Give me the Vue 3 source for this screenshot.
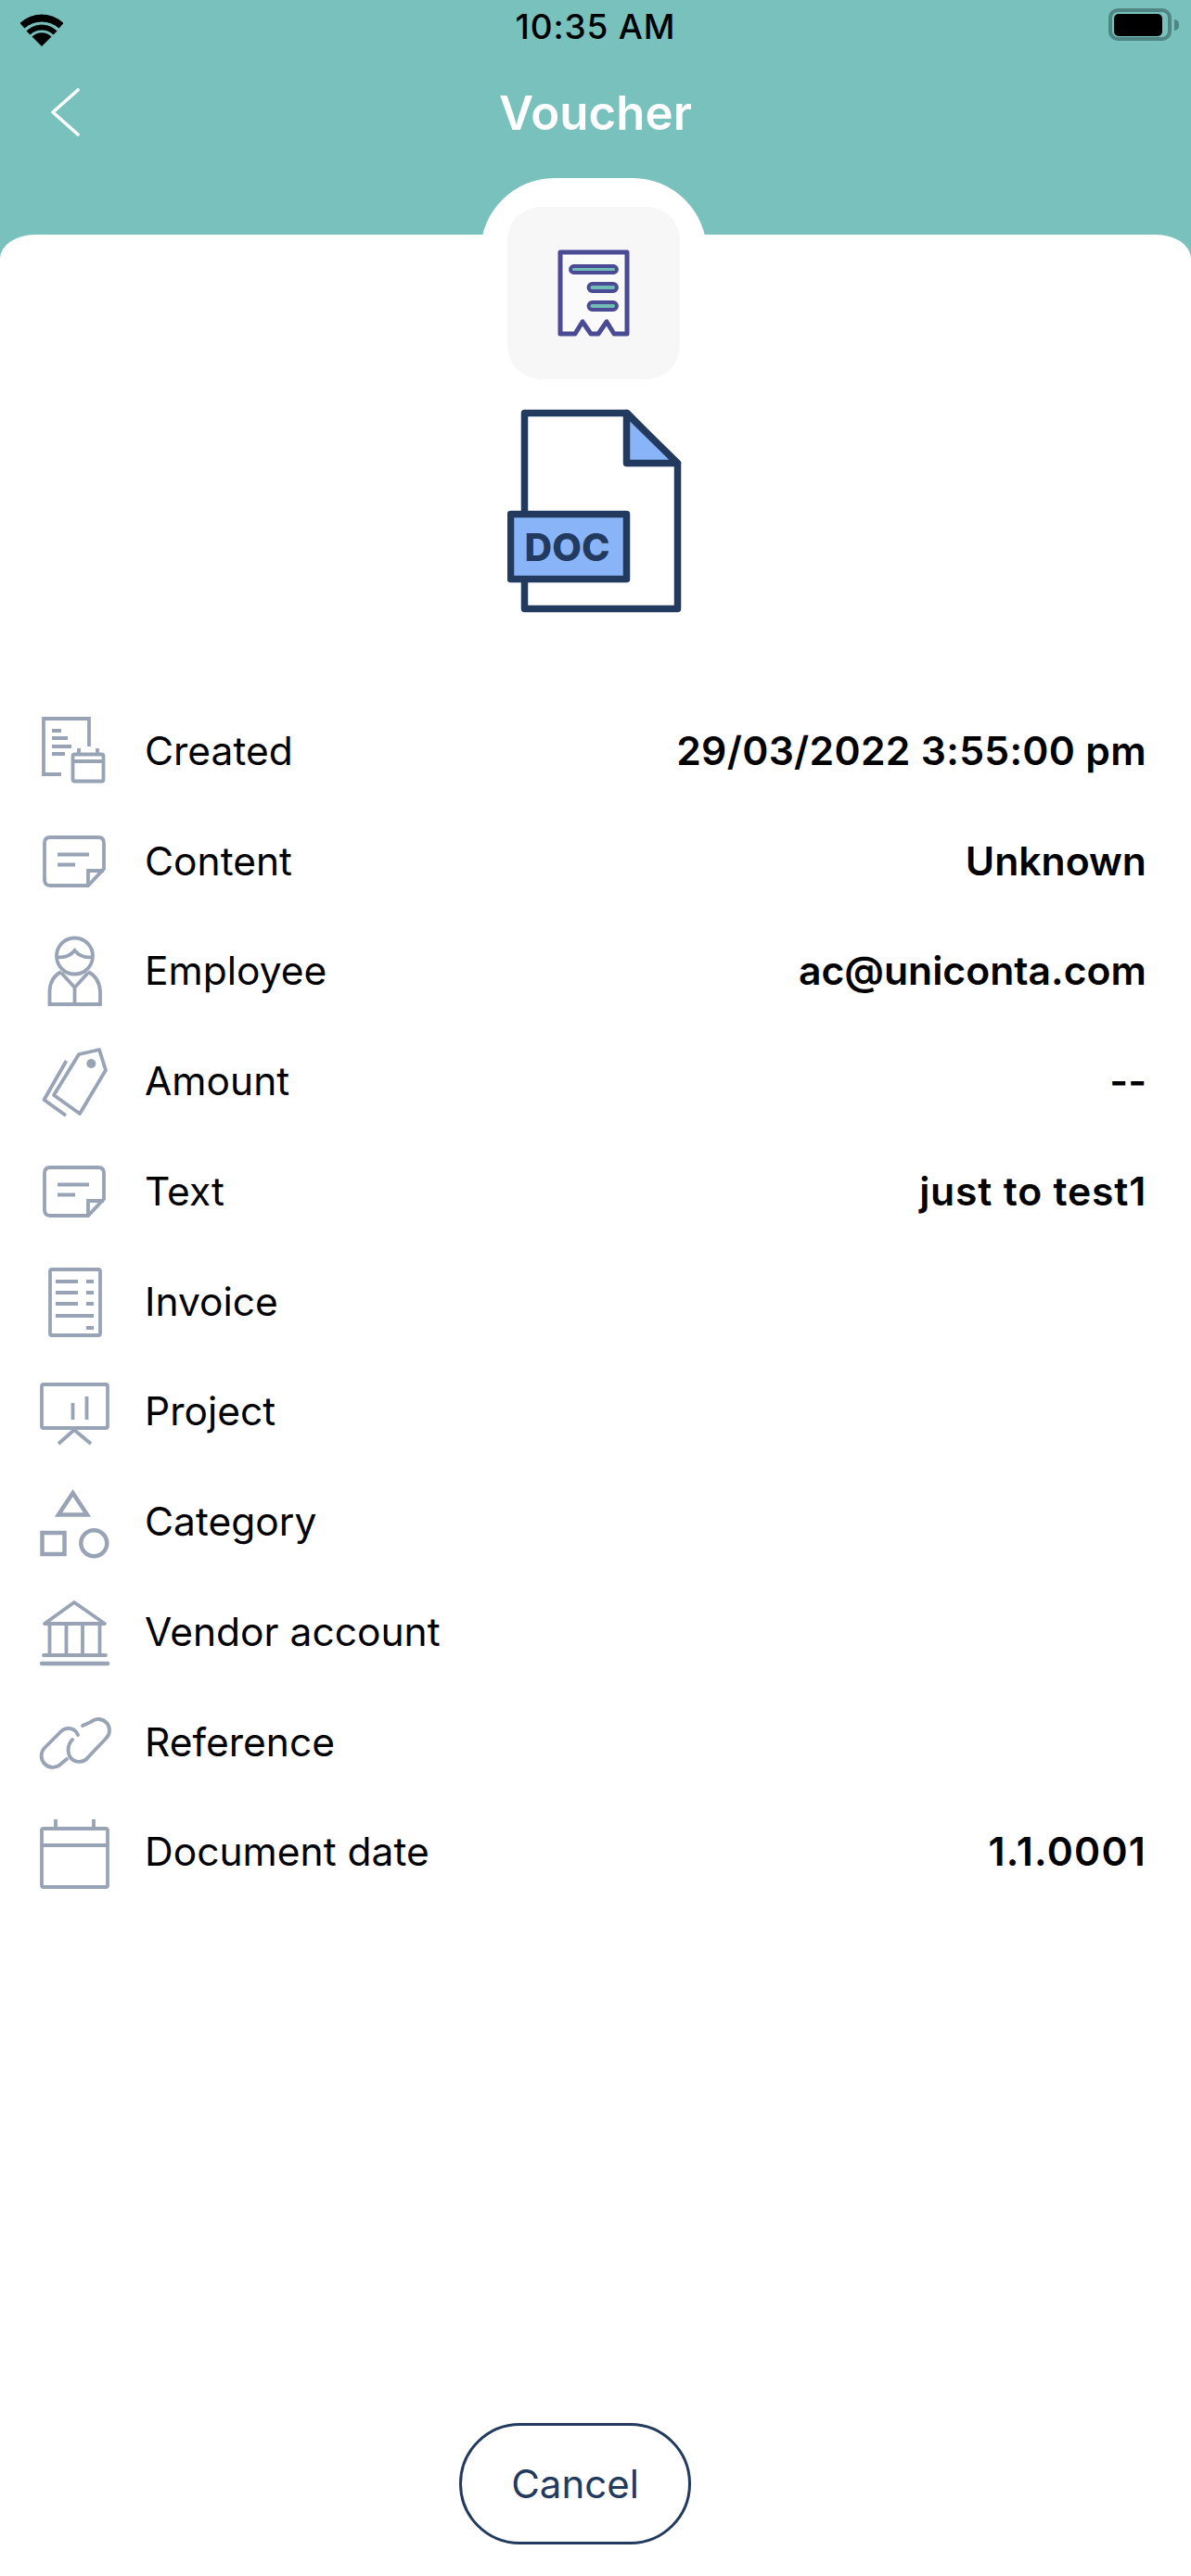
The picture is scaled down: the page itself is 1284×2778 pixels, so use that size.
<script setup>
const rows = [
  { icon: 'created', label: 'Created', value: '29/03/2022 3:55:00 pm', spacing: '0.3px' },
  { icon: 'note', label: 'Content', value: 'Unknown' },
  { icon: 'person', label: 'Employee', value: 'ac@uniconta.com' },
  { icon: 'tag', label: 'Amount', value: '--' },
  { icon: 'note', label: 'Text', value: 'just to test1', spacing: '0.8px' },
  { icon: 'invoice', label: 'Invoice', value: '' },
  { icon: 'project', label: 'Project', value: '' },
  { icon: 'shapes', label: 'Category', value: '' },
  { icon: 'bank', label: 'Vendor account', value: '' },
  { icon: 'link', label: 'Reference', value: '' },
  { icon: 'calendar', label: 'Document date', value: '1.1.0001', spacing: '1.2px' },
]
</script>

<template>
  <div class="screen">
    <header class="header">
      <div class="status">
        <svg class="wifi" width="48" height="36" viewBox="0 0 48 36">
          <path d="M24 35 L13.500 24.500 A15 15 0 0 1 34.500 24.500 Z" fill="#000" />
          <path d="M8 18.500 A23 23 0 0 1 40 18.500 L36.500 22 A18 18 0 0 0 11.500 22 Z" fill="#000" stroke="#000" stroke-width="1" stroke-linejoin="round" />
          <path d="M1 10 A34 34 0 0 1 47 10 L42.500 15 A28 28 0 0 0 5.500 15 Z" fill="#000" stroke="#000" stroke-width="1" stroke-linejoin="round" />
        </svg>
        <span class="time">10:35 AM</span>
        <div class="battery">
          <div class="battery-body"><div class="battery-fill"></div></div>
          <div class="battery-cap"></div>
        </div>
      </div>
      <div class="nav">
        <svg class="back" width="33" height="52" viewBox="0 0 33 52">
          <path d="M30 2 L3 26 L30 50" fill="none" stroke="#fff" stroke-width="3.600" stroke-linecap="round" stroke-linejoin="round" />
        </svg>
        <h1 class="title">Voucher</h1>
      </div>
    </header>

    <main class="card">
      <div class="bump"></div>
      <div class="hero-icon">
        <svg width="80" height="96" viewBox="0 0 80 96">
          <path d="M4 4 H76 V92 H62 L54 79 L45 92 H37 L28 79 L20 92 H4 Z" fill="#fafafa" stroke="#4a4a95" stroke-width="5" stroke-linejoin="round" />
          <rect x="15" y="19" width="50" height="7" rx="3.500" fill="#6fbdb6" stroke="#4a4a95" stroke-width="3.800" />
          <rect x="34.500" y="38" width="30.500" height="8" rx="4" fill="#6fbdb6" stroke="#4a4a95" stroke-width="3.800" />
          <rect x="34.500" y="58" width="30.500" height="8" rx="4" fill="#6fbdb6" stroke="#4a4a95" stroke-width="3.800" />
        </svg>
      </div>
      <svg class="doc-icon" width="188" height="220" viewBox="0 0 188 220">
        <path d="M18.500 4.500 H129 L183.500 60 V215.500 H18.500 Z" fill="#fff" stroke="#223a5e" stroke-width="7.500" stroke-linejoin="round" />
        <path d="M128.500 4.500 L183.500 58.500 H128.500 Z" fill="#8ab4f8" stroke="#223a5e" stroke-width="7.500" stroke-linejoin="round" />
        <rect x="3.500" y="113.500" width="125" height="70" fill="#8ab4f8" stroke="#223a5e" stroke-width="7.500" stroke-linejoin="round" />
        <text x="64.500" y="164" text-anchor="middle" class="doc-text">DOC</text>
      </svg>

      <div class="rows">
        <div v-for="row in rows" :key="row.label" class="row">
          <div class="row-icon">
            <svg width="80" height="80" viewBox="0 0 80 80" fill="none" stroke="#98a4b5" stroke-width="3.800">
              <template v-if="row.icon === 'created'">
                <path d="M26 66 H7 V6 H56 V36" />
                <path d="M16 19 H26 M16 27 H33 M16 36 H37 M16 44 H30" />
                <rect x="38.500" y="44.500" width="33" height="29" rx="2" />
                <path d="M38.500 52 H71.500 M45 38 V44 M65 38 V44" />
              </template>
              <template v-else-if="row.icon === 'note'">
                <path d="M14 15 H66 Q72 15 72 21 V49 L55 67 H14 Q8 67 8 61 V21 Q8 15 14 15 Z" />
                <path d="M55 67 V51 H72 M22 33.500 H56 M22 44.500 H41" />
              </template>
              <template v-else-if="row.icon === 'person'">
                <circle cx="40.500" cy="24" r="19.500" />
                <path d="M21 25 Q33 27 40.500 18 Q48 27 60 25" />
                <path d="M26 41 Q14 47 13.500 62 V76 H68 V62 Q67 47 55 41 M26 42 L40.500 58 L55 42 M40.500 58 V76" />
              </template>
              <template v-else-if="row.icon === 'tag'">
                <path d="M45 11 L67 6 L74 28 L46 75 L18 55 Z" stroke-linejoin="round" />
                <path d="M31.500 18 L7.500 60 L31 77" stroke-linejoin="round" />
                <circle cx="58.300" cy="21" r="5" fill="#98a4b5" stroke="none" />
              </template>
              <template v-else-if="row.icon === 'invoice'">
                <rect x="14" y="6" width="54" height="71" rx="2" />
                <path d="M20 19 H44 M53 19 H61 M20 31 H44 M53 31 H61 M20 43 H44 M53 43 H61 M20 56 H61 M53 69 H61" />
              </template>
              <template v-else-if="row.icon === 'project'">
                <rect x="5" y="11" width="71" height="47" rx="2" />
                <path d="M38.500 31 V49 M53.500 24 V49 M40 60 L23 75 M40 60 L58 75" />
              </template>
              <template v-else-if="row.icon === 'shapes'">
                <path d="M38.500 9 L54 32.500 H23 Z" stroke-width="4.500" />
                <rect x="5.500" y="52" width="24" height="23" stroke-width="4.500" />
                <circle cx="61.300" cy="63.200" r="14" stroke-width="4.500" />
              </template>
              <template v-else-if="row.icon === 'bank'">
                <path d="M8 32 L40 9 L73 32 Z" stroke-linejoin="round" />
                <path d="M13.500 33 V65 M31.500 33 V65 M49 33 V65 M67.500 33 V65 M7 66 H74" stroke-linecap="round" />
                <path d="M5 75 H76" stroke-width="4.500" stroke-linecap="round" />
              </template>
              <template v-else-if="row.icon === 'link'">
                <path d="M32 59 L26 64 A12 12 0 0 1 8 47 L26 29 A11 11 0 0 1 44 33" stroke-linecap="round" />
                <path d="M49 23 L58 19 A12 12 0 0 1 74 37 L55 57 A12 12 0 0 1 35 56 Q31 46 38 38" stroke-linecap="round" />
              </template>
              <template v-else-if="row.icon === 'calendar'">
                <rect x="5" y="15" width="71" height="63" rx="2" />
                <path d="M5 33 H76 M20 5 V15 M61 5 V15" />
              </template>
            </svg>
          </div>
          <span class="label">{{ row.label }}</span>
          <span class="value" :style="{ letterSpacing: row.spacing }">{{ row.value }}</span>
        </div>
      </div>

      <div class="footer">
        <button class="cancel">Cancel</button>
      </div>
    </main>
  </div>
</template>

<style>
html, body {
  margin: 0;
  background: #fff;
}
</style>

<style scoped>
.screen {
  width: 1284px;
  height: 2778px;
  display: flex;
  flex-direction: column;
  overflow: hidden;
  font-family: Inter, "Liberation Sans", sans-serif;
}

.header {
  height: 300px;
  flex: none;
  background: #78c1bd;
  color: #fff;
}

.status {
  height: 46px;
  padding: 10px 13px 0;
  display: grid;
  grid-template-columns: 1fr auto 1fr;
  align-items: center;
  box-sizing: border-box;
}

.wifi {
  justify-self: start;
  margin-left: 8px;
}

.time {
  color: #000;
  font-size: 37px;
  font-weight: 500;
  letter-spacing: 0.8px;
  position: relative;
  top: -4px;
}

.battery {
  justify-self: end;
  display: flex;
  align-items: center;
  gap: 3px;
  position: relative;
  top: -6px;
}

.battery-body {
  width: 68px;
  height: 35px;
  border: 4px solid #4f8583;
  border-radius: 10px;
  padding: 2px 6px 1px 2px;
  box-sizing: border-box;
}

.battery-fill {
  height: 100%;
  background: #000;
  border-radius: 5px;
}

.battery-cap {
  width: 5px;
  height: 12px;
  background: #4f8583;
  border-radius: 0 6px 6px 0;
}

.nav {
  height: 150px;
  position: relative;
  display: flex;
  align-items: center;
  justify-content: center;
}

.back {
  position: absolute;
  left: 54px;
  top: 49px;
}

.title {
  margin: 0;
  font-size: 51px;
  font-weight: 600;
}

.card {
  flex: 1;
  position: relative;
  display: flex;
  flex-direction: column;
  align-items: center;
  margin-top: -47px;
  background: #fff;
  border-radius: 38px 38px 0 0 / 26px 26px 0 0;
}

.bump {
  position: absolute;
  top: -61px;
  left: 518px;
  width: 244px;
  height: 140px;
  background: #fff;
  border-radius: 80px 80px 0 0;
}

.hero-icon {
  position: relative;
  margin-top: -30px;
  margin-right: 4px;
  width: 186px;
  height: 186px;
  background: #f7f7f7;
  border-radius: 36px;
  display: flex;
  align-items: center;
  justify-content: center;
}

.doc-icon {
  margin-top: 32px;
  margin-right: 2px;
  flex: none;
}

.doc-text {
  font-family: Inter, "Liberation Sans", sans-serif;
  font-weight: 800;
  font-size: 41px;
  fill: #223a5e;
}

.rows {
  align-self: stretch;
  margin-top: 89px;
  padding: 0 48px 0 40px;
}

.row {
  height: 118.75px;
  display: flex;
  align-items: center;
}

.row-icon {
  width: 80px;
  height: 80px;
  margin-right: 36px;
  flex: none;
}

.label {
  font-size: 42.500px;
  color: #000;
}

.value {
  margin-left: auto;
  font-size: 42.700px;
  font-weight: 600;
  color: #000;
}

.footer {
  margin-top: auto;
  align-self: stretch;
  padding: 0 0 34px 495px;
}

.cancel {
  width: 250px;
  height: 131px;
  display: block;
  background: #fff;
  border: 3.500px solid #223a5e;
  border-radius: 66px;
  font-family: Inter, "Liberation Sans", sans-serif;
  font-size: 42px;
  color: #223a5e;
}
</style>
